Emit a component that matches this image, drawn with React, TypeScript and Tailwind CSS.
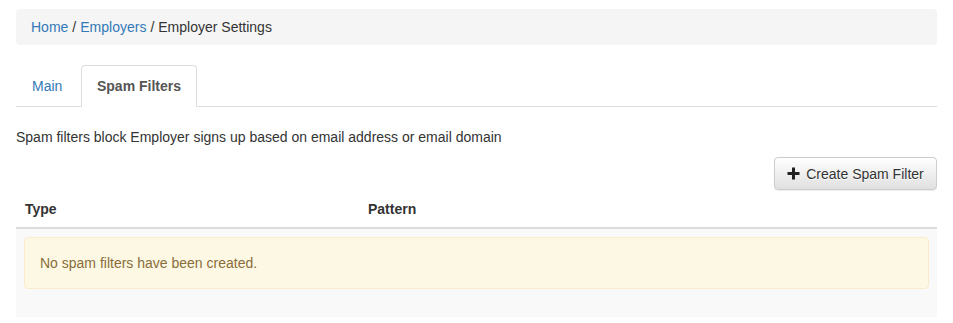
import React from "react";

export default function App() {
  return (
    <div
      className="min-h-[323px] bg-white px-4 pt-[9px] text-[14px] leading-5 text-[#333]"
      style={{ fontFamily: '"Liberation Sans", Arial, sans-serif' }}
    >
      <div className="mb-5 flex h-9 items-center rounded bg-[#f5f5f5] px-[15px]">
        <a className="text-[#337ab7]">Home</a>
        <span className="px-[4px] text-[#333]">/</span>
        <a className="text-[#337ab7]">Employers</a>
        <span className="px-[4px] text-[#333]">/</span>
        <span>Employer Settings</span>
      </div>

      <div className="flex border-b border-[#ddd]">
        <div className="-mb-px mr-[2px] w-[63px] whitespace-nowrap border border-transparent py-[10px] pl-[15px] text-[#337ab7]">
          Main
        </div>
        <div className="-mb-px w-[116px] whitespace-nowrap rounded-t border border-[#ddd] border-b-white bg-white py-[10px] text-center font-bold text-[#555]">
          Spam Filters
        </div>
      </div>

      <p className="mt-5 mb-[10px]">
        Spam filters block Employer signs up based on email address or email domain
      </p>

      <div className="flex justify-end">
        <button
          className="flex h-[33px] w-[163px] items-center justify-center gap-[5px] whitespace-nowrap rounded border border-[#ccc] bg-gradient-to-b from-white to-[#e0e0e0] text-[#333] shadow-[0_1px_1px_rgba(0,0,0,0.075)]"
          style={{ textShadow: "0 1px 0 #fff" }}
        >
          <svg width="13" height="13" viewBox="0 0 13 13" className="mr-[1px]">
            <rect x="5" y="0.5" width="3" height="12" fill="#222" />
            <rect x="0.5" y="5" width="12" height="3" fill="#222" />
          </svg>
          <span>Create Spam Filter</span>
        </button>
      </div>

      <div className="mt-px">
        <div className="grid grid-cols-[344px_1fr] border-b-2 border-[#ddd] font-bold">
          <div className="p-2 pl-[9px]">Type</div>
          <div className="p-2">Pattern</div>
        </div>
        <div className="bg-[#f9f9f9] p-2">
          <div className="mb-5 rounded border border-[#faebcc] bg-[#fcf8e3] p-[15px] text-[#8a6d3b]">
            No spam filters have been created.
          </div>
        </div>
      </div>
    </div>
  );
}
